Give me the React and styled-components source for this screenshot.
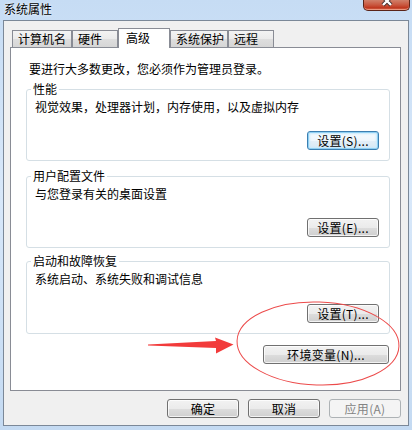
import React from "react";
import styled, { createGlobalStyle } from "styled-components";

const GlobalStyle = createGlobalStyle`
  html, body {
    margin: 0;
    padding: 0;
  }
  body {
    width: 412px;
    height: 430px;
    overflow: hidden;
    font-family: "Noto Sans CJK SC", sans-serif;
    font-size: 12px;
    color: #000;
  }
`;

const Frame = styled.div`
  position: relative;
  width: 412px;
  height: 430px;
  box-sizing: border-box;
  padding: 0 3px;
  display: flex;
  flex-direction: column;
  background: linear-gradient(180deg, #c6dcf4 0%, #d8e8fa 45%, #c4daf2 100%);
`;

const TitleBar = styled.div`
  height: 20px;
  display: flex;
  justify-content: space-between;
  align-items: flex-start;
`;

const Title = styled.div`
  padding: 2px 0 0 1px;
  line-height: 14px;
  text-shadow: 0 0 3px #fff;
`;

const CloseButton = styled.div`
  width: 47px;
  height: 11px;
  margin-right: -1px;
  box-sizing: border-box;
  border: 1px solid #5a2418;
  border-top: none;
  border-radius: 0 0 5px 5px;
  display: flex;
  justify-content: center;
  background: linear-gradient(180deg, #d0806a 0%, #c9563e 50%, #c03a22 75%, #d0654a 100%);
  box-shadow: inset 0 -1px 0 rgba(255, 190, 170, 0.6);
`;

const Body = styled.div`
  height: 406px;
  box-sizing: border-box;
  border: 1px solid #7b8898;
  background: #f0f0f0;
  padding: 7px 7px 0 6px;
  display: flex;
  flex-direction: column;
`;

const TabStrip = styled.div`
  position: relative;
  z-index: 1;
  height: 20px;
  margin-bottom: -1px;
  padding-left: 2px;
  display: flex;
  align-items: flex-end;
`;

const Tab = styled.div`
  width: ${(p) => p.$w}px;
  height: ${(p) => (p.$active ? 20 : 17)}px;
  margin-bottom: ${(p) => (p.$active ? 0 : 1)}px;
  box-sizing: border-box;
  border: 1px solid #898c95;
  border-bottom: none;
  padding-left: ${(p) => (p.$active ? 7 : 5)}px;
  line-height: ${(p) => (p.$active ? 17 : 16)}px;
  white-space: nowrap;
  background: ${(p) =>
    p.$active
      ? "#fff"
      : "linear-gradient(180deg, #f3f3f3 0%, #ebebeb 50%, #dedede 51%, #d6d6d6 100%)"};
`;

const Panel = styled.div`
  height: 344px;
  box-sizing: border-box;
  border: 1px solid #898c95;
  background: #fff;
  padding: 14px 10px 0 15px;
  display: flex;
  flex-direction: column;
`;

const Notice = styled.div`
  margin-left: 3px;
  line-height: 14px;
`;

const Group = styled.fieldset`
  margin: ${(p) => p.$mt}px 0 0 0;
  padding: 0 10px 10px 8px;
  min-width: 0;
  border: 1px solid #d5dfe5;
  border-radius: 3px;
  display: flex;
  flex-direction: column;
`;

const Legend = styled.legend`
  margin-left: -4px;
  padding: 0 2px;
  line-height: 14px;
`;

const Desc = styled.div`
  margin-top: 4px;
  line-height: 14px;
`;

const Button = styled.button`
  width: ${(p) => p.$w || 72}px;
  height: 19px;
  margin-top: ${(p) => p.$mt || 0}px;
  align-self: flex-end;
  box-sizing: border-box;
  padding: 0;
  font-family: "Noto Sans CJK SC", sans-serif;
  font-size: 12px;
  line-height: 15px;
  color: #000;
  border: 1px solid #707070;
  border-radius: 3px;
  background: linear-gradient(180deg, #f2f2f2 0%, #ebebeb 50%, #dddddd 51%, #cfcfcf 100%);
  box-shadow: inset 0 0 0 1px rgba(255, 255, 255, 0.75);
  display: flex;
  align-items: center;
  justify-content: center;
  letter-spacing: 0.3px;

  &[data-focus="true"] {
    border-color: #3c7fb1;
    background: linear-gradient(180deg, #f6fbfe 0%, #eef6fc 50%, #e3eff8 51%, #d8e8f4 100%);
    box-shadow: inset 0 0 0 1px #8fd0f3, inset 0 0 2px 2px #cbeafb;
  }

  &:disabled {
    border-color: #adb2b5;
    background: #f4f4f4;
    color: #838383;
    box-shadow: none;
  }
`;

const EnvButton = styled(Button)`
  margin-top: 11px;
  margin-right: 1px;
`;

const Footer = styled.div`
  margin-top: 8px;
  display: flex;
  justify-content: flex-end;
  gap: 9px;
`;

const Annotation = styled.svg`
  position: absolute;
  left: 0;
  top: 0;
  pointer-events: none;
`;

const tabs = [
  { label: "计算机名", w: 60 },
  { label: "硬件", w: 46 },
  { label: "高级", w: 52, active: true },
  { label: "系统保护", w: 58 },
  { label: "远程", w: 46 },
];

const groups = [
  { title: "性能", desc: "视觉效果，处理器计划，内存使用，以及虚拟内存", btn: "设置(S)...", mt: 6, bm: 17, focus: true },
  { title: "用户配置文件", desc: "与您登录有关的桌面设置", btn: "设置(E)...", mt: 8, bm: 17 },
  { title: "启动和故障恢复", desc: "系统启动、系统失败和调试信息", btn: "设置(T)...", mt: 6, bm: 18 },
];

export default function App() {
  return (
    <Frame>
      <GlobalStyle />
      <TitleBar>
        <Title>系统属性</Title>
        <CloseButton>
          <svg width="14" height="7" viewBox="0 0 14 7">
            <path d="M3 -3 L11 5 M11 -3 L3 5" stroke="#3a2a2a" strokeWidth="4" />
            <path d="M3 -3 L11 5 M11 -3 L3 5" stroke="#fff" strokeWidth="2.4" />
          </svg>
        </CloseButton>
      </TitleBar>

      <Body>
        <TabStrip>
          {tabs.map((t) => (
            <Tab key={t.label} $w={t.w} $active={t.active}>
              {t.label}
            </Tab>
          ))}
        </TabStrip>

        <Panel>
          <Notice>要进行大多数更改，您必须作为管理员登录。</Notice>
          {groups.map((g) => (
            <Group key={g.title} $mt={g.mt}>
              <Legend>{g.title}</Legend>
              <Desc>{g.desc}</Desc>
              <Button $mt={g.bm} data-focus={g.focus ? "true" : "false"}>
                {g.btn}
              </Button>
            </Group>
          ))}
          <EnvButton $w={126}>环境变量(N)...</EnvButton>
        </Panel>

        <Footer>
          <Button>确定</Button>
          <Button>取消</Button>
          <Button disabled>应用(A)</Button>
        </Footer>
      </Body>

      <Annotation width="412" height="430" viewBox="0 0 412 430">
        <ellipse cx="318" cy="343.5" rx="81" ry="41.5" fill="none" stroke="#ec4a4a" strokeWidth="1" transform="rotate(2 318 343.5)" />
        <polygon points="148,344.5 216,341 215,337.5 233.5,344.5 216,353.5 216,348 148,345.5" fill="#f23b3b" />
      </Annotation>
    </Frame>
  );
}
